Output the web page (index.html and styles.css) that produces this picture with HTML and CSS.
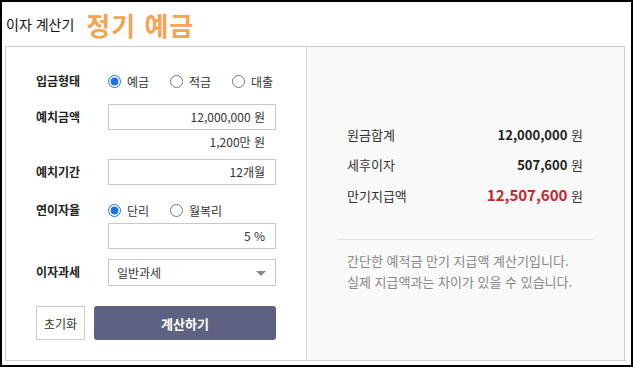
FILE: index.html
```html
<!DOCTYPE html>
<html lang="ko">
<head>
    <meta charset="UTF-8">
    <meta name="viewport" content="width=device-width, initial-scale=1.0">
    <title>이자 계산기</title>
    <link rel="stylesheet" href="styles.css">
</head>
<body>
    <div class="frame">
        <header class="head">
            <h1 class="app-name">이자 계산기</h1>
            <h2 class="calc-type">정기 예금</h2>
        </header>

        <section class="calc">
            <form class="calc-form">
                <div class="field">
                    <span class="field-label">입금형태</span>
                    <div class="field-body radios">
                        <label class="radio"><input type="radio" name="kind" checked>예금</label>
                        <label class="radio"><input type="radio" name="kind">적금</label>
                        <label class="radio"><input type="radio" name="kind">대출</label>
                    </div>
                </div>

                <div class="field">
                    <span class="field-label">예치금액</span>
                    <div class="field-body">
                        <div class="box">12,000,000 원</div>
                        <p class="hint">1,200만 원</p>
                    </div>
                </div>

                <div class="field field-period">
                    <span class="field-label">예치기간</span>
                    <div class="field-body">
                        <div class="box">12개월</div>
                    </div>
                </div>

                <div class="field field-rate">
                    <span class="field-label">연이자율</span>
                    <div class="field-body">
                        <div class="radios">
                            <label class="radio"><input type="radio" name="rate" checked>단리</label>
                            <label class="radio"><input type="radio" name="rate">월복리</label>
                        </div>
                        <div class="box">5 %</div>
                    </div>
                </div>

                <div class="field field-tax">
                    <span class="field-label">이자과세</span>
                    <div class="field-body">
                        <div class="box select">일반과세<span class="caret"></span></div>
                    </div>
                </div>

                <div class="actions">
                    <button type="button" class="btn-reset">초기화</button>
                    <button type="button" class="btn-calc">계산하기</button>
                </div>
            </form>

            <div class="calc-result">
                <ul class="result-list">
                    <li><span>원금합계</span><span><b>12,000,000</b> 원</span></li>
                    <li><span>세후이자</span><span><b>507,600</b> 원</span></li>
                    <li><span>만기지급액</span><span><b class="total">12,507,600</b> 원</span></li>
                </ul>
                <p class="note">간단한 예적금 만기 지급액 계산기입니다.<br>실제 지급액과는 차이가 있을 수 있습니다.</p>
            </div>
        </section>
    </div>
</body>
</html>
```

FILE: styles.css
```css
* {
    margin: 0;
    padding: 0;
    box-sizing: border-box;
    font-family: 'Noto Sans CJK KR', 'Liberation Sans', sans-serif;
}

body {
    background-color: #fff;
    color: #333;
}

.frame {
    width: 633px;
    height: 367px;
    border: 2px solid #000;
    padding: 0 6px 4px 3px;
    display: flex;
    flex-direction: column;
}


/* header */

.head {
    height: 44px;
    display: flex;
    align-items: center;
}

.app-name {
    font-size: 14px;
    font-weight: normal;
    color: #111;
    margin: 0 12px 0 1px;
}

.calc-type {
    font-size: 26px;
    font-weight: bold;
    color: #f7a354;
    letter-spacing: 1px;
}


/* calculator panel */

.calc {
    flex: 1;
    display: flex;
    border: 1px solid #ccc;
}

.calc-form {
    width: 301px;
    border-right: 1px solid #ddd;
    padding: 21px 0 0 30px;
    font-size: 12px;
}

.field {
    display: flex;
    align-items: flex-start;
    margin-top: 10px;
}

.field:first-child {
    margin-top: 0;
}

.field-period {
    margin-top: 7px;
}

.field-rate {
    margin-top: 12px;
}

.field-label {
    width: 72px;
    line-height: 26px;
    font-weight: bold;
    color: #222;
}

.field-body {
    width: 168px;
}

.radios {
    display: flex;
    align-items: center;
    height: 26px;
}

.radio {
    display: inline-flex;
    align-items: center;
    flex-shrink: 0;
    width: 62px;
    color: #333;
}

.radio input {
    width: 13px;
    height: 13px;
    margin: 0 6px 0 0;
    accent-color: #1a73e8;
}

.box {
    height: 26px;
    line-height: 24px;
    border: 1px solid #c8c8c8;
    padding: 0 10px;
    text-align: right;
    color: #333;
    background-color: #fff;
}

.hint {
    margin-top: 2px;
    line-height: 20px;
    padding-right: 11px;
    text-align: right;
    color: #333;
}

.select {
    position: relative;
    height: 27px;
    line-height: 25px;
    text-align: left;
    padding-left: 8px;
}

.caret {
    position: absolute;
    right: 9px;
    top: 11px;
    border-left: 5px solid transparent;
    border-right: 5px solid transparent;
    border-top: 5px solid #888;
}

.actions {
    display: flex;
    margin-top: 20px;
    gap: 9px;
}

.btn-reset,
.btn-calc {
    height: 34px;
    font-size: 12px;
    cursor: pointer;
}

.btn-reset {
    width: 49px;
    border: 1px solid #ccc;
    background-color: #fff;
    color: #333;
}

.btn-calc {
    width: 182px;
    border: none;
    border-radius: 3px;
    background-color: #5d6282;
    color: #fff;
    font-weight: bold;
    font-size: 13px;
}


/* result */

.calc-result {
    flex: 1;
    background-color: #f9f9f9;
    padding: 73px 41px 0 40px;
    font-size: 13px;
}

.result-list {
    list-style: none;
}

.result-list li {
    display: flex;
    justify-content: space-between;
    align-items: baseline;
    line-height: 30px;
    color: #333;
}

.result-list b {
    font-size: 13px;
    color: #222;
}

.result-list .total {
    font-size: 15px;
    color: #c1272d;
}

.note {
    margin: 28px -10px 0;
    padding: 10px 10px 0;
    border-top: 1px solid #e2e2e2;
    line-height: 21px;
    color: #888;
}
```
